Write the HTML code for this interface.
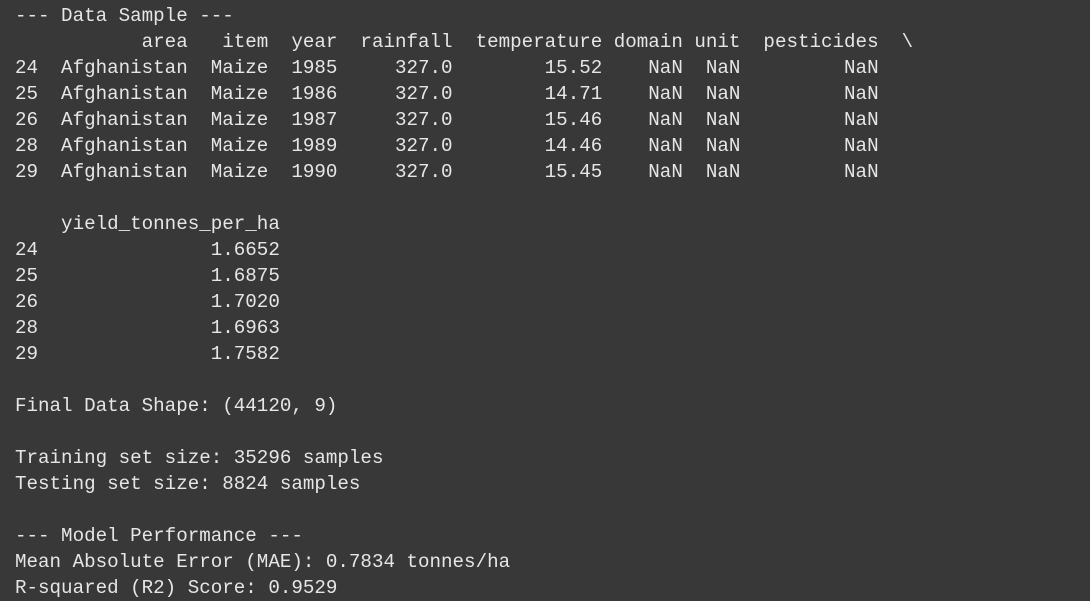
<!DOCTYPE html>
<html><head><meta charset="utf-8"><style>
html,body{margin:0;padding:0;background:#383838;width:1090px;height:601px;overflow:hidden}
pre{margin:0;padding:3px 0 0 15px;font-family:"Liberation Mono","DejaVu Sans Mono",monospace;font-size:19.2px;line-height:26px;color:#e6e6e6}
</style></head><body><pre>--- Data Sample ---
           area   item  year  rainfall  temperature domain unit  pesticides  \
24  Afghanistan  Maize  1985     327.0        15.52    NaN  NaN         NaN
25  Afghanistan  Maize  1986     327.0        14.71    NaN  NaN         NaN
26  Afghanistan  Maize  1987     327.0        15.46    NaN  NaN         NaN
28  Afghanistan  Maize  1989     327.0        14.46    NaN  NaN         NaN
29  Afghanistan  Maize  1990     327.0        15.45    NaN  NaN         NaN

    yield_tonnes_per_ha
24               1.6652
25               1.6875
26               1.7020
28               1.6963
29               1.7582

Final Data Shape: (44120, 9)

Training set size: 35296 samples
Testing set size: 8824 samples

--- Model Performance ---
Mean Absolute Error (MAE): 0.7834 tonnes/ha
R-squared (R2) Score: 0.9529</pre></body></html>
